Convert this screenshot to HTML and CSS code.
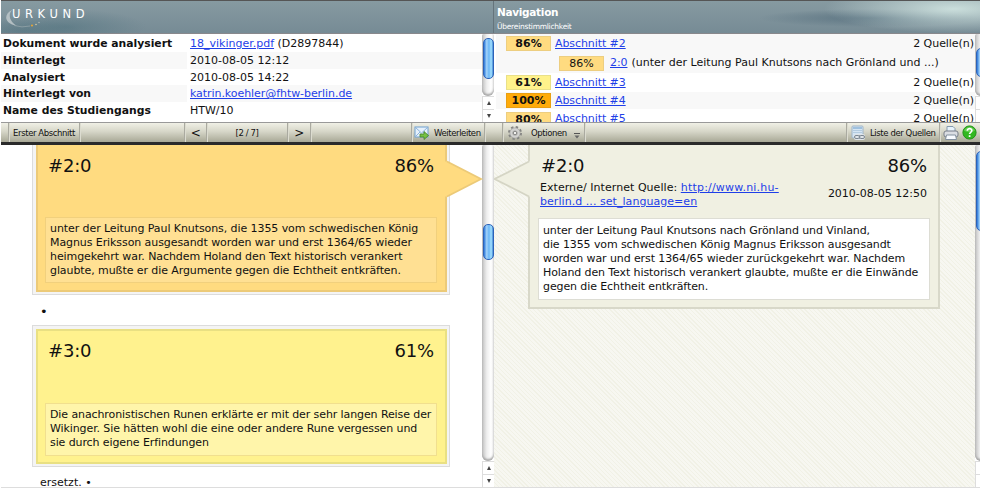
FILE: index.html
```html
<!DOCTYPE html>
<html lang="de">
<head>
<meta charset="utf-8">
<title>URKUND</title>
<link rel="stylesheet" href="styles.css">
</head>
<body>
<div class="app">
  <header class="head">
    <div class="brand">
      <svg class="arc" width="50" height="30" viewBox="0 0 50 30"><path d="M8 4C0 8 -1 17 13 20C7 16 3 10 8 4z" fill="#b4bfc3"/><path d="M10 19.500Q18 22 26 20" fill="none" stroke="#93a3a8" stroke-width=".8"/><circle cx="28" cy="19.500" r="1.100" fill="#e0a43a"/><circle cx="32" cy="18.500" r=".8" fill="#d8c9a0"/><circle cx="35" cy="16.500" r=".7" fill="#b9bdb5"/></svg>
      <span class="logo">URKUND</span>
    </div>
    <div class="navhead"><b>Navigation</b><span>Übereinstimmlichkeit</span></div>
  </header>
  <section class="top">
    <div class="info">
      <dl>
        <dt>Dokument wurde analysiert</dt><dd><a>18_vikinger.pdf</a> (D2897844)</dd>
        <dt class="alt">Hinterlegt</dt><dd class="alt">2010-08-05 12:12</dd>
        <dt>Analysiert</dt><dd>2010-08-05 14:22</dd>
        <dt class="alt">Hinterlegt von</dt><dd class="alt"><a class="mail">katrin.koehler@fhtw-berlin.de</a></dd>
        <dt>Name des Studiengangs</dt><dd>HTW/10</dd>
      </dl>
      <div class="scroll"><div class="track"><div class="thumb t1"></div></div><i class="up"></i><i class="down"></i></div>
    </div>
    <div class="nav">
      <div class="list">
        <div class="row alt r1"><span class="pct">86%</span><a>Abschnitt #2</a><span class="src">2 Quelle(n)</span></div>
        <div class="row alt sub"><span class="pct">86%</span><a>2:0</a><span class="rest">(unter der Leitung Paul Knutsons nach Grönland und ...)</span></div>
        <div class="row r3"><span class="pct yellow">61%</span><a>Abschnitt #3</a><span class="src">2 Quelle(n)</span></div>
        <div class="row alt r4"><span class="pct orange">100%</span><a>Abschnitt #4</a><span class="src">2 Quelle(n)</span></div>
        <div class="row r5"><span class="pct">80%</span><a>Abschnitt #5</a><span class="src">2 Quelle(n)</span></div>
      </div>
      <div class="scroll"><div class="track"><div class="thumb t2"></div></div><i class="up"></i><i class="down"></i></div>
    </div>
  </section>
  <nav class="bar">
    <div class="c w1"></div>
    <div class="c w2">Erster Abschnitt</div>
    <div class="c w3"></div>
    <div class="c w4 arrow">&lt;</div>
    <div class="c w5">[2 / 7]</div>
    <div class="c w6 arrow">&gt;</div>
    <div class="c w7"></div>
    <div class="c w8"><svg width="16" height="16" viewBox="0 0 16 16"><rect x="1" y="2" width="13" height="10" fill="#e6f1fb" stroke="#6f9fd0"/><path d="M1.500 2.500L7.500 8L13.500 2.500M1.500 11.500L6 7M13.500 11.500L9 7" fill="none" stroke="#8db4dc"/><path d="M6 9h4V6.500L14.500 10.500L10 14.500V12H6z" fill="#76c043" stroke="#438328" stroke-width=".8"/></svg><span class="fwd">Weiterleiten</span></div>
    <div class="c w9"></div>
    <div class="c w10"><svg width="16" height="16" viewBox="0 0 16 16"><circle cx="8" cy="8" r="5.800" fill="none" stroke="#858583" stroke-width="2.400" stroke-dasharray="2.300 2.255"/><circle cx="8" cy="8" r="3.700" fill="none" stroke="#a2a2a0" stroke-width="3.400"/><circle cx="8" cy="8" r="3.700" fill="none" stroke="#d2d2d0" stroke-width="2.200"/><circle cx="8" cy="8" r="1.700" fill="#f1f1ee" stroke="#777" stroke-width=".8"/></svg><span class="opt">Optionen</span><svg class="drop" width="6" height="6" viewBox="0 0 6 6"><path d="M0 .5h6" stroke="#555"/><path d="M.5 2.500h5L3 5.500z" fill="#666"/></svg></div>
    <div class="c w11"></div>
    <div class="c w12"><svg width="16" height="16" viewBox="0 0 16 16"><rect x="2" y="1" width="11" height="12" rx="1" fill="#d5e5f3" stroke="#9fb5c8"/><path d="M3 3h9" stroke="#8cb5d8" stroke-width="1.500"/><path d="M3 5.500h9M3 7.500h9" stroke="#b4cce0"/><rect x="4" y="9" width="11" height="6" rx="2" fill="#dfe4e8"/><rect x="4.500" y="10.500" width="5.500" height="3" rx="1.500" fill="none" stroke="#7b8792"/><rect x="9" y="10.500" width="5.500" height="3" rx="1.500" fill="none" stroke="#7b8792"/></svg><span class="lst">Liste der Quellen</span></div>
    <div class="c w13"><svg width="16" height="16" viewBox="0 0 16 16"><path d="M4 7V1.500h6l2 2V7z" fill="#e7f2fb" stroke="#8399ad"/><rect x="1" y="6" width="14" height="6" rx="2" fill="#dadde2" stroke="#777d87"/><path d="M3.500 10h9l1 4.500h-11z" fill="#f8fbff" stroke="#82909e"/></svg><svg class="help" width="15" height="15" viewBox="0 0 15 15"><circle cx="7.500" cy="7.500" r="6.600" fill="#32b820" stroke="#25921b"/><path d="M2 5.500a6 6 0 0 1 11 0c-3 2-8 2-11 0" fill="#7ddb67" opacity=".65"/><path d="M5.300 5.800C5.300 3 10 3 9.800 5.800C9.700 7.400 7.600 7.300 7.600 9.100M7.600 10.300v1.700" fill="none" stroke="#fff" stroke-width="1.700"/></svg></div>
  </nav>
  <main class="main">
    <div class="doc">
      <div class="text">
        <article class="frame first">
          <div class="card gold">
            <h2><span>#2:0</span><span>86%</span></h2>
            <p>unter der Leitung Paul Knutsons, die 1355 vom schwedischen König<br>Magnus Eriksson ausgesandt worden war und erst 1364/65 wieder<br>heimgekehrt war. Nachdem Holand den Text historisch verankert<br>glaubte, mußte er die Argumente gegen die Echtheit entkräften.</p>
            <svg class="point" width="38" height="38" viewBox="0 0 38 38"><path d="M0 1.500H2L36 19L2 36.500H0z" fill="#ffdb80"/><path d="M2 1.500L36 19L2 36.500" fill="none" stroke="#ecca78" stroke-width="1.800"/></svg>
          </div>
        </article>
        <div class="dot">•</div>
        <article class="frame second">
          <div class="card lemon">
            <h2><span>#3:0</span><span>61%</span></h2>
            <p>Die anachronistischen Runen erklärte er mit der sehr langen Reise der<br>Wikinger. Sie hätten wohl die eine oder andere Rune vergessen und<br>sie durch eigene Erfindungen</p>
          </div>
        </article>
        <div class="tail">ersetzt. •</div>
      </div>
      <div class="scroll"><div class="track"><div class="thumb t3"></div></div><i class="up"></i><i class="down"></i></div>
    </div>
    <div class="sources">
      <article class="source">
        <svg class="point" width="38" height="38" viewBox="0 0 38 38"><path d="M38 1.500H36L1.500 19L36 36.500H38z" fill="#f0f0e2"/><path d="M36 1.500L1.500 19L36 36.500" fill="none" stroke="#d5d5c5" stroke-width="1.800"/></svg>
        <h2><span>#2:0</span><span>86%</span></h2>
        <div class="meta"><div>Externe/ Internet Quelle: <a class="url">http://www.ni.hu-</a><br><a>berlin.d ... set_language=en</a></div><time>2010-08-05 12:50</time></div>
        <p>unter der Leitung Paul Knutsons nach Grönland und Vinland,<br>die 1355 vom schwedischen König Magnus Eriksson ausgesandt<br>worden war und erst 1364/65 wieder zurückgekehrt war. Nachdem<br>Holand den Text historisch verankert glaubte, mußte er die Einwände<br>gegen die Echtheit entkräften.</p>
      </article>
      <div class="scroll"><div class="track"><div class="thumb t4"></div></div><i class="up"></i><i class="down"></i></div>
    </div>
  </main>
</div>
</body>
</html>
```

FILE: styles.css
```css
* { box-sizing: border-box; }
body { margin: 0; background: #fff; color: #111; font: 11px/14px "DejaVu Sans", Verdana, sans-serif; overflow: hidden; }
a { color: #1f3fe8; text-decoration: underline; }
h2, p, dl, dd { margin: 0; }
.app { width: 979px; height: 488px; margin-left: 1px; border-bottom: 1px solid #ddd; overflow: hidden; white-space: nowrap; }

.head { display: flex; height: 34px; border-top: 1px solid #555; border-bottom: 1px solid #88888c; background: linear-gradient(#869aa1, #768b95); }
.brand { position: relative; width: 493px; border-right: 1px solid #65747c; padding: 6px 0 0 11px; background: radial-gradient(ellipse 80px 18px at 65px 26px, rgba(75, 111, 123, .5), transparent), radial-gradient(ellipse 60px 12px at 20px 30px, rgba(85, 117, 128, .5), transparent); }
.arc { position: absolute; left: 3px; top: 5px; }
.logo { position: relative; display: block; color: #fff; font: 11.5px/15px "DejaVu Sans", sans-serif; letter-spacing: 4.6px; }
.navhead { flex: 1; padding: 3px 0 0 3px; color: #fff; background: radial-gradient(ellipse 130px 24px at 460px 8px, rgba(220, 240, 235, .8), transparent), radial-gradient(ellipse 110px 9px at 375px 17px, rgba(85, 110, 125, .8), transparent); }
.navhead b { display: block; font-size: 10.5px; line-height: 16px; letter-spacing: -.3px; }
.navhead span { display: block; font-size: 7.5px; line-height: 13px; letter-spacing: -.25px; }

.top { display: flex; height: 88px; }
.info { display: flex; width: 493px; }
.info dl { flex: 1; display: grid; grid-template-columns: 186px 1fr; grid-template-rows: repeat(5, 16.8px); column-gap: 3px; padding-top: 1px; line-height: 17px; }
.info dt { font-weight: bold; padding-left: 2px; font-size: 10.8px; }
.mail { letter-spacing: -.06px; }
.info .alt, .row.alt { background: #f8f8f8; }
.nav { display: flex; flex: 1; overflow: hidden; }
.list { width: 481px; height: 88px; overflow: hidden; flex: none; padding-left: 2px; }
.row { display: flex; align-items: center; padding-left: 10px; }
.r1 { height: 19px; }
.sub { height: 20px; padding-left: 63px; }
.r3 { height: 19px; }
.r4 { height: 17px; }
.r5 { height: 20px; }
.row > a { letter-spacing: -.08px; }
.pct { width: 45px; height: 15px; margin-right: 4px; border: 1px solid #edce80; background: #ffdb80; color: #111; font-weight: bold; line-height: 14px; text-align: center; }
.sub .pct { font-weight: normal; margin-right: 6px; }
.yellow { background: #fff28b; border-color: #e9e089; }
.orange { background: #ffab0a; border-color: #e99f12; }
.rest { margin-left: 4px; }
.src { margin-left: auto; margin-right: 1px; letter-spacing: -.05px; }

.scroll { width: 12px; flex: none; display: flex; flex-direction: column; background: #fff; }
.track { flex: 1; border-radius: 2px 2px 6px 6px; background: linear-gradient(90deg, #c0c0c0, #eee 40%, #fff 75%, #eaeaea); box-shadow: inset 0 -2px 2px #aaa; }
.thumb { width: 11px; margin-left: .5px; border: 1px solid #2d62b8; border-radius: 5px; background: linear-gradient(90deg, #2b77d8, #a4d4fb 30%, #69b5f5 55%, #a5e2ff 80%, #438bd6); }
.scroll i { height: 13px; border: solid #ddd; border-width: 1px 0 0 1px; display: flex; align-items: center; justify-content: center; }
.scroll i::after { content: ""; border: solid transparent; border-width: 0 2.5px 4px; border-bottom-color: #444; }
.scroll i.down::after { border-width: 4px 2.5px 0; border-top-color: #444; }
.t1 { height: 41px; margin-top: 4px; }
.t2 { height: 29px; margin-top: 14px; }
.t3 { height: 36px; margin-top: 79px; }
.t4 { height: 80px; margin-top: 6px; }

.bar { display: flex; height: 23px; border-top: 1px solid #999; border-bottom: 3px solid #2a2a2a; background: linear-gradient(#f0f0e6, #d6d6c8 45%, #a8a896); font-size: 8.5px; letter-spacing: -.4px; }
.c { display: flex; align-items: center; justify-content: center; border-right: 1px solid #aaaaa0; box-shadow: 1px 0 #dcdcd0; flex: none; }
.w1 { width: 8px; } .w2 { width: 71px; } .w3 { width: 105px; } .w4 { width: 22px; }
.w5 { width: 81px; } .w6 { width: 23px; } .w7 { width: 101px; } .w8 { width: 73px; }
.w9 { width: 18px; } .w10 { width: 82px; } .w11 { width: 262px; } .w12 { width: 93px; }
.w13 { width: 40px; border: 0; box-shadow: none; gap: 3px; }
.w8, .w10, .w12 { justify-content: flex-start; padding-left: 2px; }
.w10 { padding-left: 4px; }
.w12 { padding-left: 3px; }
.arrow { font-size: 12px; }
.fwd { margin-left: 4px; } .opt { margin-left: 8px; } .lst { margin-left: 4px; }
.drop { margin: 7px 0 0 7px; }

.main { display: flex; height: 342px; }
.doc { display: flex; width: 493px; }
.text { flex: 1; padding-left: 31px; height: 342px; }
.frame { width: 418px; border: 1px solid #dcdcdc; background: #f4f4f4; padding: 3px 2px 2px 3px; }
.first { height: 150px; border-top: 0; padding-top: 0; }
.second { height: 142px; }
.card { position: relative; height: 100%; border: 2px solid; padding: 0 8px 0 7px; }
.first .card { border-top: 0; height: 147px; }
.gold { background: #ffdb80; border-color: #ecca78; }
.lemon { background: #fff28e; border-color: #e9e083; }
h2 { display: flex; justify-content: space-between; padding: 0 3px; font: 18px/22px "DejaVu Sans", Verdana, sans-serif; letter-spacing: -.2px; }
.card h2 { padding-top: 10px; height: 72px; }
.lemon h2 { padding-top: 9px; }
.card p { border: 1px solid rgba(200, 160, 60, .25); background: rgba(255, 255, 255, .15); padding: 4px; height: 66px; line-height: 14.1px; letter-spacing: -.083px; }
.card.lemon p { height: 53px; background: rgba(255, 255, 255, .25); letter-spacing: -.1px; }
.gold .point { position: absolute; left: 407px; top: 15px; }
.dot { height: 30px; line-height: 33px; padding-left: 8px; font-size: 13px; }
.tail { padding: 9px 0 0 8px; }

.sources { display: flex; justify-content: space-between; width: 486px; overflow: hidden; flex: none; background: repeating-linear-gradient(45deg, #f1f1e6 0 1px, #f7f7f1 1px 3px); }
.source { position: relative; margin-left: 34px; width: 412px; height: 164px; border: 2px solid #d8d8c9; border-top: 0; background: #f0f0e2; padding: 10px 8px 0 8px; }
.source .point { position: absolute; left: -37px; top: 15px; }
.meta { display: flex; justify-content: space-between; height: 41px; padding: 4px 3px 0 2px; }
.meta .url { letter-spacing: .2px; }
.meta div { letter-spacing: .05px; }
.meta time { padding-top: 6px; }
.source p { background: #fff; border: 1px solid #ddddd4; height: 82px; padding: 5px 4px; line-height: 14.1px; letter-spacing: -.1px; }
.sources .scroll, .nav .scroll { width: 12px; margin-right: -7px; }
```
